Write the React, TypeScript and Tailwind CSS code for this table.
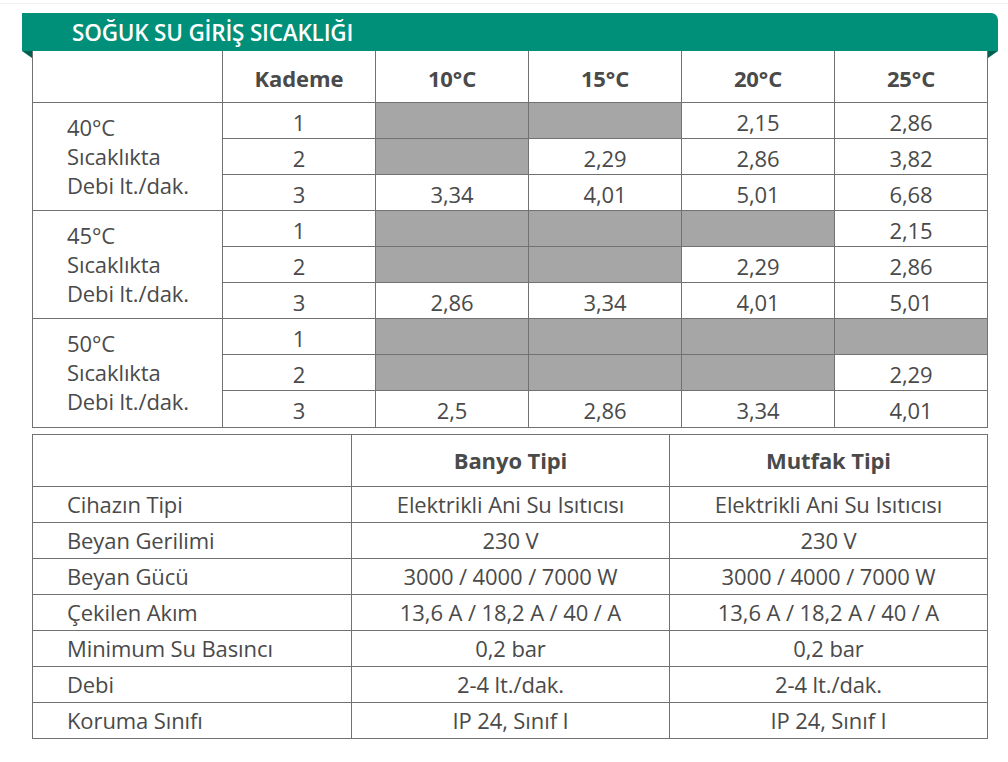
import React from "react";

const G = "bg-[#a6a6a6]";

const flowGroups = [
  {
    label: "40°C",
    rows: [
      ["1", null, null, "2,15", "2,86"],
      ["2", null, "2,29", "2,86", "3,82"],
      ["3", "3,34", "4,01", "5,01", "6,68"],
    ],
  },
  {
    label: "45°C",
    rows: [
      ["1", null, null, null, "2,15"],
      ["2", null, null, "2,29", "2,86"],
      ["3", "2,86", "3,34", "4,01", "5,01"],
    ],
  },
  {
    label: "50°C",
    rows: [
      ["1", null, null, null, null],
      ["2", null, null, null, "2,29"],
      ["3", "2,5", "2,86", "3,34", "4,01"],
    ],
  },
];

const specs = [
  ["Cihazın Tipi", "Elektrikli Ani Su Isıtıcısı"],
  ["Beyan Gerilimi", "230 V"],
  ["Beyan Gücü", "3000 / 4000 / 7000 W"],
  ["Çekilen Akım", "13,6 A / 18,2 A / 40 / A"],
  ["Minimum Su Basıncı", "0,2 bar"],
  ["Debi", "2-4 lt./dak."],
  ["Koruma Sınıfı", "IP 24, Sınıf I"],
];

const cell = "border border-[#727272] text-center p-0 pt-[3px] leading-[28px]";
const cell2 = "border border-[#727272] text-center p-0 leading-[28px]";

export default function App() {
  return (
    <div
      className="w-[1008px] h-[762px] bg-white text-[#4a4a4a] pt-[3px]"
      style={{ fontFamily: '"Open Sans", "Noto Sans", sans-serif' }}
    >
      <div className="h-[1px] bg-[#f0f0f0]" />
      <div className="relative ml-[22px] mt-[9px] w-[976px]">
        <div className="flex h-[38px] items-center rounded-tr-[7px] bg-[#00907a] pl-[50px] pt-[2px] text-[22.5px] font-semibold tracking-[-0.2px] text-white">
          SOĞUK SU GİRİŞ SICAKLIĞI
        </div>
        <div className="absolute left-0 top-[38px] h-0 w-0 border-l-[10px] border-t-[7px] border-l-transparent border-t-[#00604f]" />
        <div className="absolute right-0 top-[38px] h-0 w-0 border-r-[10px] border-t-[7px] border-r-transparent border-t-[#00604f]" />
      </div>

      <table className="ml-[32px] w-[955px] table-fixed border-collapse text-[22px] tracking-[-0.1px]">
        <colgroup>
          <col className="w-[190px]" />
          <col className="w-[153px]" />
          <col className="w-[153px]" />
          <col className="w-[153px]" />
          <col className="w-[153px]" />
          <col className="w-[153px]" />
        </colgroup>
        <thead>
          <tr className="h-[51px]">
            <th className={`${cell} border-t-0`} />
            <th className={`${cell} border-t-0 font-bold`}>Kademe</th>
            <th className={`${cell} border-t-0 font-bold`}>10°C</th>
            <th className={`${cell} border-t-0 font-bold`}>15°C</th>
            <th className={`${cell} border-t-0 font-bold`}>20°C</th>
            <th className={`${cell} border-t-0 font-bold`}>25°C</th>
          </tr>
        </thead>
        <tbody>
          {flowGroups.map((g, gi) =>
            g.rows.map((r, i) => (
              <tr key={g.label + i} className={gi === 2 && i === 2 ? "h-[37px]" : "h-[36px]"}>
                {i === 0 && (
                  <td
                    rowSpan={3}
                    className="border border-[#727272] pl-[34px] text-left align-middle leading-[29px]"
                  >
                    {g.label}
                    <br />
                    Sıcaklıkta
                    <br />
                    Debi lt./dak.
                  </td>
                )}
                {r.map((v, j) => (
                  <td key={j} className={`${cell} ${v === null ? G : ""}`}>
                    {v}
                  </td>
                ))}
              </tr>
            ))
          )}
        </tbody>
      </table>

      <table className="ml-[32px] mt-[6px] w-[955px] table-fixed border-collapse text-[22px] tracking-[-0.1px]">
        <colgroup>
          <col className="w-[319px]" />
          <col className="w-[318px]" />
          <col className="w-[318px]" />
        </colgroup>
        <thead>
          <tr className="h-[52px]">
            <th className={cell2} />
            <th className={`${cell2} font-bold`}>Banyo Tipi</th>
            <th className={`${cell2} font-bold`}>Mutfak Tipi</th>
          </tr>
        </thead>
        <tbody>
          {specs.map(([k, v]) => (
            <tr key={k} className="h-[36px]">
              <td className="border border-[#727272] pl-[34px] text-left leading-[28px]">{k}</td>
              <td className={cell2}>{v}</td>
              <td className={cell2}>{v}</td>
            </tr>
          ))}
        </tbody>
      </table>
    </div>
  );
}
